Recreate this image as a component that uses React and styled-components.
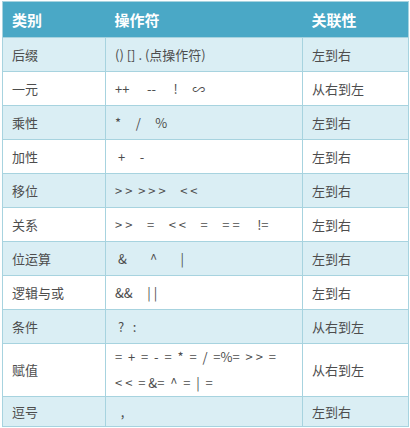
import React from 'react'
import styled, { createGlobalStyle } from 'styled-components'

const GlobalStyle = createGlobalStyle`
  body {
    margin: 0;
    background: #ffffff;
    font-family: "Noto Sans CJK SC", "Noto Sans", sans-serif;
  }
`

const Page = styled.div`
  padding: 1px 2px 0 2px;
`

const Table = styled.table`
  width: 406px;
  border-collapse: collapse;
  table-layout: fixed;
  border: 1px solid #a7d3df;
`

const HeadCell = styled.th`
  background: #4aa8c6;
  color: #ffffff;
  font-size: 15px;
  font-weight: bold;
  text-align: left;
  height: 35px;
  padding: 0 9px;
  border: none;
`

const Row = styled.tr`
  background: ${p => (p.$odd ? '#daeef4' : '#ffffff')};
`

const Cell = styled.td`
  height: ${p => p.$h || 33}px;
  padding: 0 9px;
  border: 1px solid #a7d3df;
  font-size: 13px;
  color: #4d4d4d;
  line-height: ${p => p.$lh || 20}px;
  white-space: pre;
  vertical-align: middle;
`

const rows = [
  ['后缀', '() [] . (点操作符)', '左到右'],
  ['一元', '++      --      !     ∽', '从右到左'],
  ['乘性', '*     /     %', '左到右'],
  ['加性', ' +     -', '左到右'],
  ['移位', '> >  > > >     < <', '左到右'],
  ['关系', '> >     =     < <     =     = =      !=', '左到右'],
  ['位运算', ' &        ^        |', '左到右'],
  ['逻辑与或', '&&     | |', '左到右'],
  ['条件', ' ?   :', '从右到左'],
  ['赋值', '=  +  =  -  =  *  =  /  =%=  > >  =\n< <  = &=  ^  =  |  =', '从右到左', 51, 26],
  ['逗号', '  ,', '左到右', 29],
]

export default function App() {
  return (
    <Page>
      <GlobalStyle />
      <Table>
        <colgroup>
          <col style={{ width: 103 }} />
          <col style={{ width: 197 }} />
          <col style={{ width: 106 }} />
        </colgroup>
        <thead>
          <tr>
            <HeadCell>类别</HeadCell>
            <HeadCell>操作符</HeadCell>
            <HeadCell>关联性</HeadCell>
          </tr>
        </thead>
        <tbody>
          {rows.map(([kind, ops, assoc, h, lh], i) => (
            <Row key={kind} $odd={i % 2 === 0}>
              <Cell $h={h}>{kind}</Cell>
              <Cell $h={h} $lh={lh}>{ops}</Cell>
              <Cell $h={h}>{assoc}</Cell>
            </Row>
          ))}
        </tbody>
      </Table>
    </Page>
  )
}
